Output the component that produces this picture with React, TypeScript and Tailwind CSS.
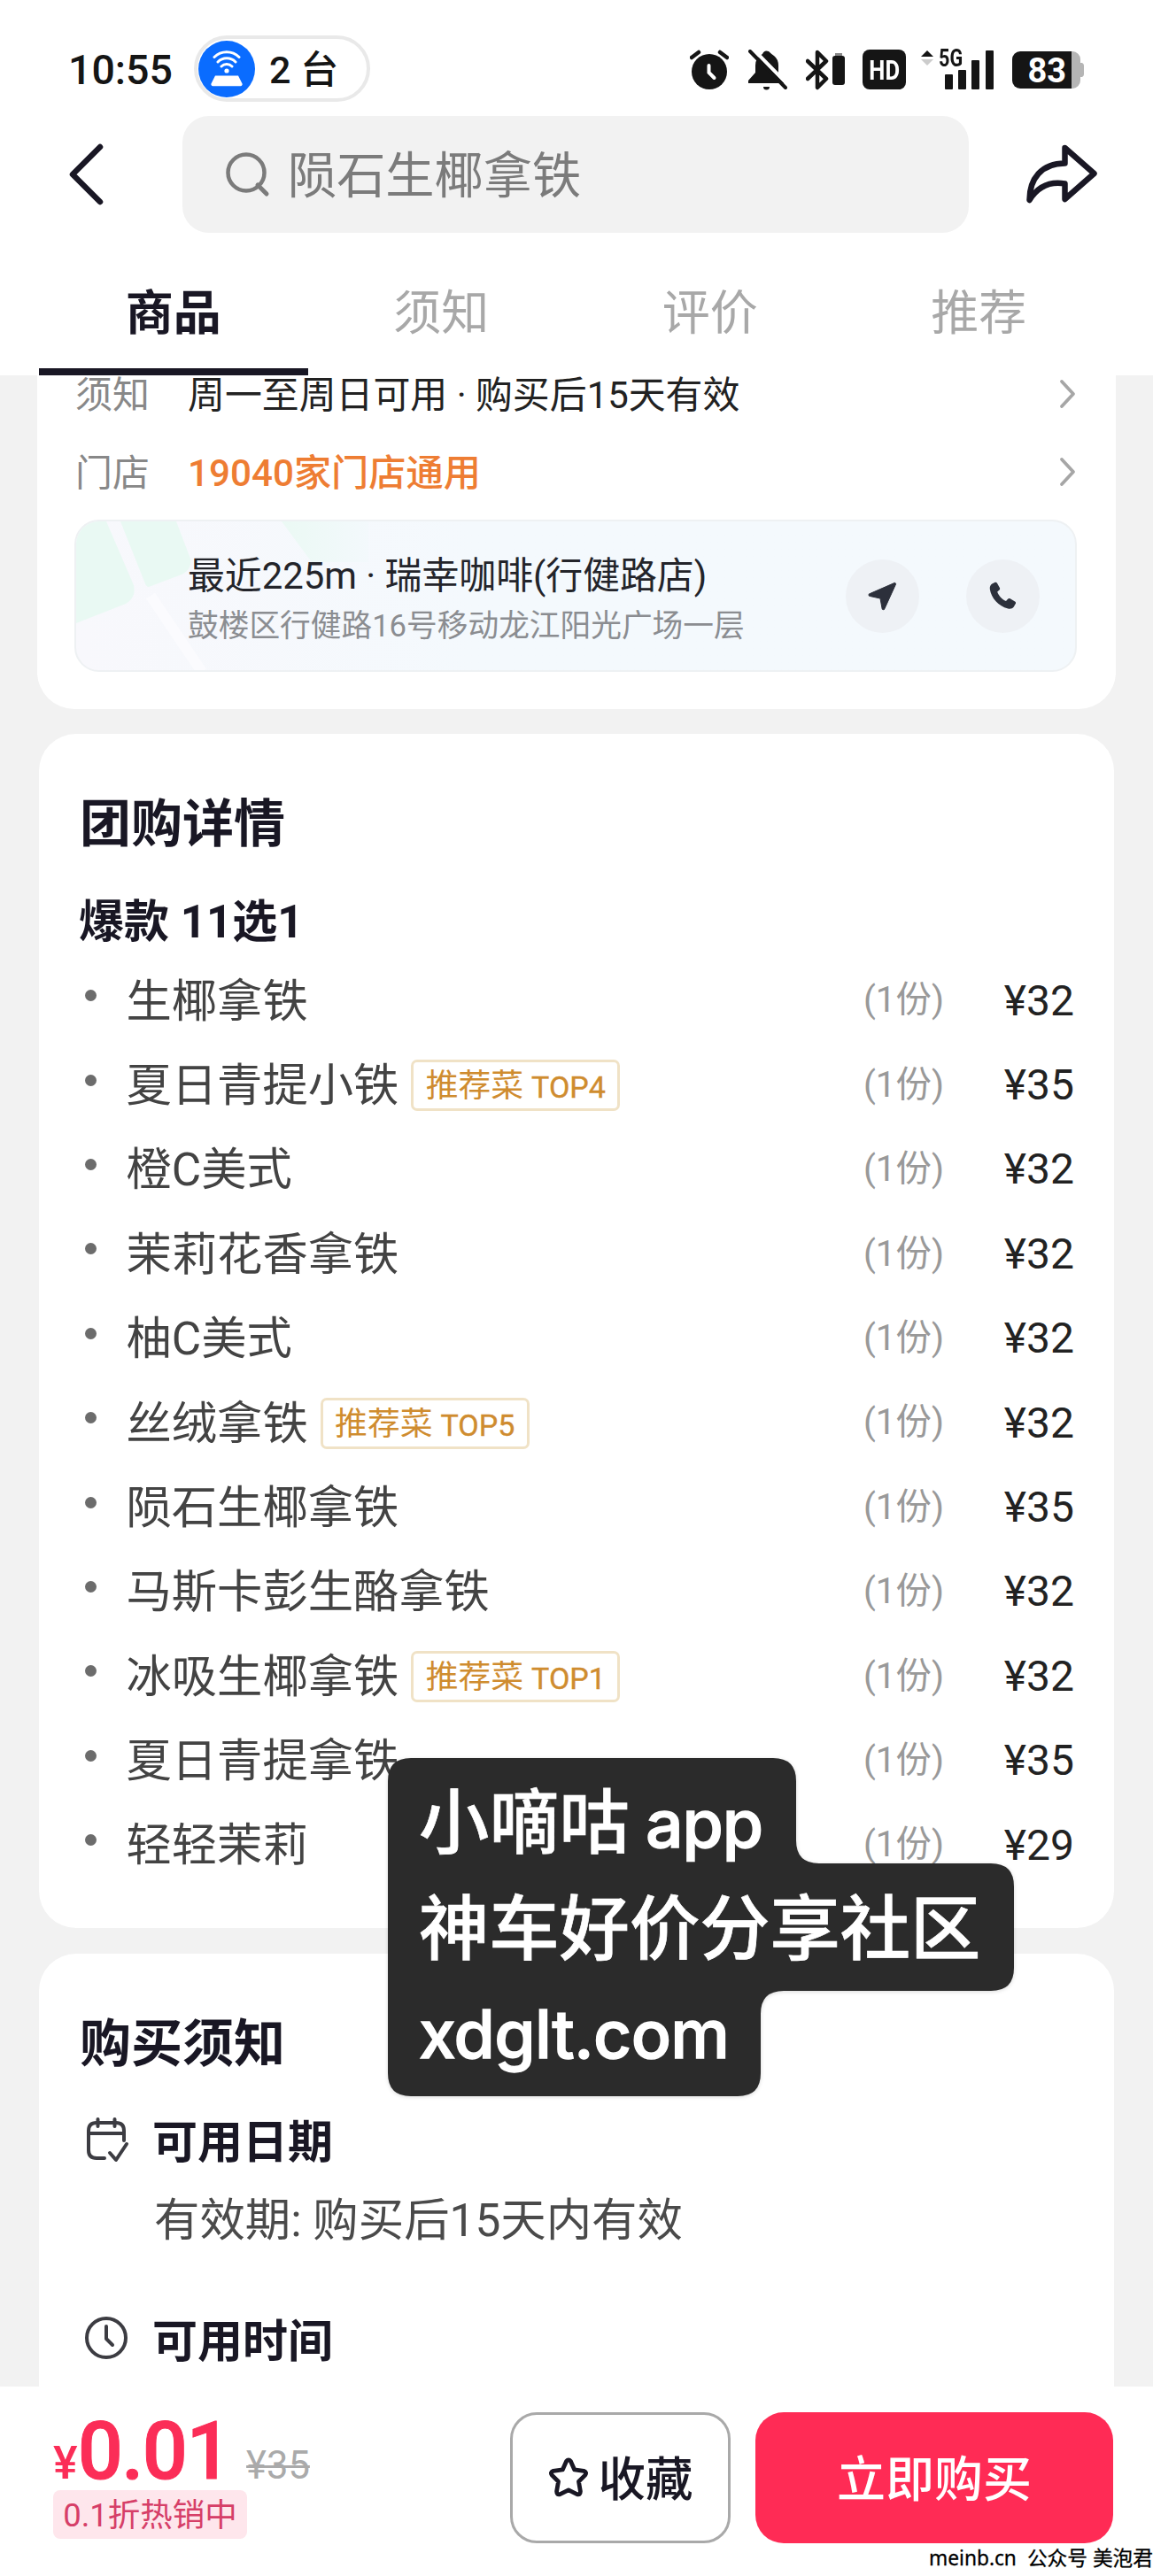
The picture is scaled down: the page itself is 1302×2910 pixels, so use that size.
import React from "react";

type Item = { name: string; price: string; tag?: string };

const items: Item[] = [
  { name: "生椰拿铁", price: "¥32" },
  { name: "夏日青提小铁", price: "¥35", tag: "TOP4" },
  { name: "橙C美式", price: "¥32" },
  { name: "茉莉花香拿铁", price: "¥32" },
  { name: "柚C美式", price: "¥32" },
  { name: "丝绒拿铁", price: "¥32", tag: "TOP5" },
  { name: "陨石生椰拿铁", price: "¥35" },
  { name: "马斯卡彭生酪拿铁", price: "¥32" },
  { name: "冰吸生椰拿铁", price: "¥32", tag: "TOP1" },
  { name: "夏日青提拿铁", price: "¥35" },
  { name: "轻轻茉莉", price: "¥29" },
];

const tabs = ["商品", "须知", "评价", "推荐"];

function RouterBadge() {
  return (
    <svg width="64" height="64" viewBox="0 0 64 64" className="shrink-0">
      <circle cx="32" cy="32" r="32" fill="#0a6cff" />
      <g fill="none" stroke="#fff" strokeWidth="3" strokeLinecap="round">
        <path d="M18 18.500a20 20 0 0 1 28 0" />
        <path d="M22 24a14 14 0 0 1 20 0" />
        <path d="M26 29a8.500 8.500 0 0 1 12 0" />
      </g>
      <circle cx="32" cy="34" r="2.600" fill="#fff" />
      <path d="M19 39.500h26l4.500 9a2 2 0 0 1-1.800 2.700H16.300a2 2 0 0 1-1.800-2.700z" fill="#fff" />
    </svg>
  );
}

function AlarmIcon() {
  return (
    <svg width="44" height="46" viewBox="0 0 44 46">
      <circle cx="22" cy="25" r="20" fill="#151515" />
      <path d="M2 9L10 3M42 9L34 3" stroke="#151515" strokeWidth="4.500" strokeLinecap="round" />
      <path d="M21.500 18v8l6 6" fill="none" stroke="#fff" strokeWidth="4" strokeLinecap="round" />
    </svg>
  );
}

function BellOffIcon() {
  return (
    <svg width="44" height="46" viewBox="0 0 44 46">
      <path
        d="M16 5Q18 0 23 2Q26 5 29 7Q34 11 34 18V27L41 37V38H0V35L8 26V18Q8 9 16 5Z"
        fill="#151515"
      />
      <path d="M17 42h7a3.500 3.500 0 0 1-7 0z" fill="#151515" />
      <path d="M-2 -6L1 2L42 43L47 43L6 -4Z" fill="none" />
      <path d="M5 -1L45 40" stroke="#fff" strokeWidth="4" />
      <path d="M0 4L8 12V20L0 12Z" fill="#fff" />
      <path d="M2 2L42 43" stroke="#151515" strokeWidth="4" strokeLinecap="round" />
    </svg>
  );
}

function BluetoothIcon() {
  return (
    <svg width="46" height="46" viewBox="0 0 46 46">
      <path
        d="M2 13L23 33L13 43V3L23 13L2 33"
        fill="none"
        stroke="#151515"
        strokeWidth="4.500"
        strokeLinejoin="round"
        strokeLinecap="round"
      />
      <rect x="30" y="7" width="14" height="33" rx="3" fill="#151515" />
      <rect x="33" y="4" width="8" height="3" fill="#888" />
    </svg>
  );
}

function SignalIcon() {
  return (
    <div className="relative h-[46px] w-[84px]">
      <svg width="84" height="46" viewBox="0 0 84 46">
        <path d="M7 1L14 8H0z" fill="#151515" />
        <path d="M7 18L14 11H0z" fill="#ccc" />
        <rect x="27" y="28" width="9" height="17" rx="1" fill="#151515" />
        <rect x="42" y="23" width="9" height="22" rx="1" fill="#151515" />
        <rect x="57" y="12" width="9" height="33" rx="1" fill="#151515" />
        <rect x="73" y="1" width="9" height="44" rx="1" fill="#151515" />
      </svg>
      <span className="absolute -top-[4px] left-[20px] origin-left scale-x-80 text-[27px] leading-7 font-bold whitespace-nowrap text-[#151515]">5G</span>
    </div>
  );
}

function BatteryIcon() {
  return (
    <svg width="82" height="44" viewBox="0 0 82 44">
      <path d="M66 1h2a9 9 0 0 1 9 9v4h2q2 1 2 3v10q0 2-2 3h-2v4a9 9 0 0 1-9 9h-2z" fill="#b5b5b5" />
      <path d="M9 1h58v42H9a9 9 0 0 1-9-9V10a9 9 0 0 1 9-9z" fill="#151515" />
      <text x="17.500" y="36" fontFamily="Roboto" fontWeight="700" fontSize="38" fill="#fff">
        83
      </text>
    </svg>
  );
}

function ShareIcon() {
  return (
    <svg width="82" height="70" viewBox="0 0 82 70" className="shrink-0">
      <path
        d="M44.500 5L77.500 34L44.500 63V45.500C24 42 12 52 4.500 64C4.500 40 18 22.500 44.500 22.500Z"
        fill="none"
        stroke="#191724"
        strokeWidth="6.500"
        strokeLinejoin="round"
      />
    </svg>
  );
}

function RowChevron() {
  return (
    <svg width="20" height="34" viewBox="0 0 20 34" className="mb-[4px] ml-auto">
      <path d="M3 3L16 17L3 31" fill="none" stroke="#a6a6a6" strokeWidth="3.800" strokeLinecap="round" strokeLinejoin="round" />
    </svg>
  );
}

function Header() {
  return (
    <header className="flex h-[424px] shrink-0 flex-col bg-white">
      <div className="mt-10 flex h-[75px] items-center pl-[77px]">
        <span className="w-[142px] pt-[3px] text-[46.500px] leading-none font-medium text-[#151515]">10:55</span>
        <div className="flex h-[75px] w-[199px] items-center rounded-full border-4 border-[#e9e9e9] pl-px">
          <RouterBadge />
          <span className="ml-[16px] pt-[3px] text-[43px] leading-none font-medium text-[#151515]">2 台</span>
        </div>
        <div className="ml-[361px] flex items-center pt-[2px]">
          <AlarmIcon />
          <div className="ml-[22px] flex"><BellOffIcon /></div>
          <div className="ml-[21px] flex"><BluetoothIcon /></div>
          <div className="ml-[18px] flex h-[45px] w-[49px] items-center justify-center rounded-[8px] bg-[#151515] pt-px text-[32px] leading-none font-bold text-white">
            <span className="scale-x-80">HD</span>
          </div>
          <div className="ml-[17px] flex"><SignalIcon /></div>
          <div className="ml-[19px] flex"><BatteryIcon /></div>
        </div>
      </div>

      <div className="mt-4 flex h-[132px] items-center pl-[76px]">
        <svg width="42" height="74" viewBox="0 0 42 74" className="shrink-0">
          <path d="M37 6L6 37L37 68" fill="none" stroke="#191724" strokeWidth="6.500" strokeLinecap="round" strokeLinejoin="round" />
        </svg>
        <div className="ml-[88px] flex h-[132px] w-[888px] items-center rounded-[30px] bg-[#f2f2f2] pl-[48px]">
          <svg width="52" height="52" viewBox="0 0 52 52">
            <circle cx="24" cy="24" r="20.500" fill="none" stroke="#7b7b7b" strokeWidth="4.500" />
            <path d="M37 38L47 48" stroke="#7b7b7b" strokeWidth="5" strokeLinecap="round" />
          </svg>
          <span className="ml-[19px] pt-[5px] text-[55.200px] leading-none text-[#7b7b7b]">陨石生椰拿铁</span>
        </div>
        <div className="ml-[64px] flex"><ShareIcon /></div>
      </div>

      <nav className="mx-[44px] mt-[27px] grid h-[134px] grid-cols-4">
        {tabs.map((t, i) => (
          <div
            key={t}
            className={
              i === 0
                ? "flex items-center justify-center border-b-8 border-[#191724] pt-[4px] text-[54px] leading-none font-bold text-[#191724]"
                : "flex items-center justify-center border-b-8 border-transparent pt-[4px] pr-[2px] text-[54px] leading-none text-[#a8a8a8]"
            }
          >
            {t}
          </div>
        ))}
      </nav>
    </header>
  );
}

function StoreCard() {
  return (
    <section className="mx-[42px] flex h-[377px] shrink-0 flex-col rounded-b-[42px] bg-white px-[42px]">
      <div className="flex h-11 items-center pt-[2px] pr-[2px] pl-px text-[41.900px] leading-none">
        <span className="w-[127px] text-[#888]">须知</span>
        <span className="text-[#222]">周一至周日可用 · 购买后15天有效</span>
        <RowChevron />
      </div>
      <div className="mt-11 flex h-11 items-center pt-[2px] pr-[2px] pl-px text-[41.900px] leading-none">
        <span className="w-[127px] text-[#888]">门店</span>
        <span className="text-[42.200px] font-medium text-[#ee7d33]">19040家门店通用</span>
        <RowChevron />
      </div>
      <div className="relative mt-[31px] flex h-[172px] w-[1132px] items-center overflow-hidden rounded-[28px] border-2 border-[#eef1f3] bg-linear-to-r from-[#f8f8fc] to-[#f4f9fd] to-40% pl-[126px]">
        <svg width="340" height="170" viewBox="0 0 340 170" className="absolute top-0 left-0">
          <defs>
            <linearGradient id="fade" x1="0" x2="1">
              <stop offset="0" stopColor="#ebf9f4" />
              <stop offset="1" stopColor="#f3f9fc" />
            </linearGradient>
          </defs>
          <path d="M0 0H34L65 72Q68 86 56 93L0 115Z" fill="#e9f9f3" />
          <path d="M50 0H113L129 42Q131 54 119 60L82 74Q79 74 77 68Z" fill="#e9f9f3" />
          <path d="M232 0H330V46H266Z" fill="url(#fade)" />
          <path d="M84 84L142 170" stroke="#fbfbfe" strokeWidth="12" />
        </svg>
        <div className="relative flex flex-col pt-[9px]">
          <span className="text-[41.850px] leading-[46px] text-[#23242a]">最近225m · 瑞幸咖啡(行健路店)</span>
          <span className="mt-[13px] text-[34.700px] leading-[40px] text-[#8b8d91]">鼓楼区行健路16号移动龙江阳光广场一层</span>
        </div>
        <div className="ml-auto flex gap-[53px] pr-[40px]">
          <div className="flex size-[83px] items-center justify-center rounded-full bg-[#eef1f5]">
            <svg width="34" height="34" viewBox="0 0 34 34">
              <path d="M30 2.500L2.500 14.500a1.500 1.500 0 0 0 0 3L14 20l2 11a1.500 1.500 0 0 0 3 .4L31.500 4a1.200 1.200 0 0 0-1.500-1.500z" fill="#2c303b" stroke="#2c303b" strokeLinejoin="round" />
            </svg>
          </div>
          <div className="flex size-[83px] items-center justify-center rounded-full bg-[#eef1f5]">
            <svg width="32" height="32" viewBox="0 0 32 32">
              <path
                d="M3.300 2.600l3-1.700c1.200-.5 2.200 0 2.800 1l2.800 5.200c.5 1.100.2 2-.7 2.700l-2 1.700c1.500 4.600 5.300 8.500 9.800 10.500l2-2.300c.8-.9 1.800-1 2.700-.5l5.400 3.200c1 .7 1.300 1.700.7 2.700l-2 3.500c-1.400 1.900-3.800 2.600-6.600 2C10.500 27.500 2.300 18.500.8 8.400c-.3-2.500.6-4.700 2.500-5.800z"
                fill="#2c303b"
              />
            </svg>
          </div>
        </div>
      </div>
    </section>
  );
}

function DetailCard() {
  return (
    <section className="mx-[44px] mt-7 flex h-[1349px] shrink-0 flex-col rounded-[42px] bg-white pt-[73px] pr-[45px] pl-[46px]">
      <h2 className="text-[58px] leading-[58px] font-bold text-[#191724]">团购详情</h2>
      <h3 className="-ml-px mt-[57px] text-[51px] leading-[50px] font-bold text-[#191724]">爆款 11选1</h3>
      <ul className="mt-4 flex flex-col">
        {items.map((it) => (
          <li key={it.name} className="flex h-[95.400px] items-center leading-none">
            <span className="mb-[12px] ml-[6px] size-[13px] rounded-full bg-[#6c6c6c]" />
            <span className="ml-[33.500px] pt-px text-[51.300px] text-[#434343]">{it.name}</span>
            {it.tag && (
              <span className="ml-[14px] flex h-[58px] w-[236px] items-center justify-center rounded-[7px] border-3 border-[#f0e2c6] pt-[3px] text-[36.800px] text-[#cf8c2f]">
                推荐菜
                <span className="ml-[9px] pt-px text-[34px] [-webkit-text-stroke:0.400px_#cf8c2f]">{it.tag}</span>
              </span>
            )}
            <span className="ml-auto text-[40.400px] text-[#999]">(1份)</span>
            <span className="ml-[66px] w-[81px] text-right text-[48px] text-[#222]">{it.price}</span>
          </li>
        ))}
      </ul>
    </section>
  );
}

function NoticeCard() {
  return (
    <section className="mx-[44px] mt-[29px] flex h-[489px] shrink-0 flex-col rounded-t-[42px] bg-white pt-[73px] pl-[46px]">
      <h2 className="text-[58px] leading-[58px] font-bold text-[#191724]">购买须知</h2>
      <div className="mt-[57px] flex h-[51px] items-center">
        <svg width="52" height="52" viewBox="0 0 52 52" className="mb-[6px] ml-[6px]">
          <g fill="none" stroke="#3c3c42" strokeWidth="4" strokeLinecap="round" strokeLinejoin="round">
            <path d="M22 46H13Q4 46 4 37V15Q4 6 13 6H35Q44 6 44 15V26" />
            <path d="M4 18H44M14.500 2V10M33.500 2V10" />
            <path d="M28 40L35 48L47 30" />
          </g>
        </svg>
        <h3 className="ml-[24px] text-[51px] leading-none font-bold text-[#191724]">可用日期</h3>
      </div>
      <p className="mt-[38px] ml-[84px] text-[51.400px] leading-[50px] text-[#4a4a4a]">有效期: 购买后15天内有效</p>
      <div className="mt-[86px] flex h-[51px] items-center">
        <svg width="50" height="50" viewBox="0 0 50 50" className="mb-[10px] ml-[5px]">
          <g fill="none" stroke="#3c3c42" strokeWidth="4" strokeLinecap="round" strokeLinejoin="round">
            <circle cx="25" cy="25" r="22" />
            <path d="M25 12V26L32 33" />
          </g>
        </svg>
        <h3 className="ml-[27px] text-[51px] leading-none font-bold text-[#191724]">可用时间</h3>
      </div>
    </section>
  );
}

function BuyBar() {
  return (
    <footer className="flex h-[214px] shrink-0 items-start bg-white pt-[29px] pl-[60px]">
      <div className="flex w-[516px] flex-col">
        <div className="flex h-[88px] items-baseline leading-[88px] text-[#fb2d57]">
          <span className="text-[52px] leading-none font-medium tracking-[-2px]">¥</span>
          <span className="ml-[2px] text-[90px] leading-[90px] font-medium tracking-[-1.500px] [-webkit-text-stroke:1px_#fb2d57]">0.01</span>
          <span className="ml-[18px] text-[43.500px] leading-none text-[#aaa] line-through decoration-[3px]">¥35</span>
        </div>
        <span className="flex h-[55px] w-[219px] items-center justify-center rounded-[8px] bg-[#fee6ec] pt-[3px] text-[36.500px] leading-none text-[#d63f68]">
          0.1折热销中
        </span>
      </div>
      <button className="flex h-[148px] w-[249px] items-center justify-center rounded-[30px] border-3 border-[#a9a9a9] text-[53.500px] leading-none font-medium text-[#191724]">
        <svg width="46" height="48" viewBox="0 0 48 48" className="mr-[11px]">
          <path
            d="M21.500 4.500Q24 1.500 26.500 4.500L31 14.500L42 16Q46 17.500 43.500 21L36 28.500L38 40Q38 44.500 34 43.500L24 38.500L14 43.500Q10 44.500 10 40L12 28.500L4.500 21Q2 17.500 6 16L17 14.500Z"
            fill="none"
            stroke="#191724"
            strokeWidth="5"
            strokeLinejoin="round"
          />
        </svg>
        <span className="pt-[5px]">收藏</span>
      </button>
      <button className="ml-[28px] flex h-[148px] w-[404px] items-center justify-center rounded-[32px] bg-[#ff2b55] pt-[5px] text-[55px] leading-none font-medium text-white">
        立即购买
      </button>
    </footer>
  );
}

function CommunityLabel() {
  return (
    <div className="absolute top-[1986px] left-[438px] h-[382px] w-[707px]">
      <svg width="707" height="382" viewBox="0 0 707 382" className="absolute inset-0 overflow-visible drop-shadow-sm">
        <path
          d="M26 0H435Q461 0 461 26V93Q461 119 487 119H681Q707 119 707 145V237Q707 263 681 263H447Q421 263 421 289V356Q421 382 395 382H26Q0 382 0 356V26Q0 0 26 0Z"
          fill="#2b2b2b"
        />
      </svg>
      <div className="relative flex flex-col pt-[13px] pl-[35px] font-[Inter,'Noto_Sans_CJK_SC',sans-serif] text-[79.300px] leading-[119px] font-medium whitespace-nowrap text-white [-webkit-text-stroke:0.700px_white]">
        <span>小嘀咕<span className="ml-[18px] text-[75px] tracking-[-1px] [-webkit-text-stroke:1.400px_white]">app</span></span>
        <span>神车好价分享社区</span>
        <span className="text-[75px] tracking-[-0.700px] [-webkit-text-stroke:1.400px_white]">xdglt.com</span>
      </div>
    </div>
  );
}

export default function App() {
  return (
    <div className="relative flex h-[2910px] w-[1302px] flex-col overflow-hidden bg-[#f2f2f2] font-[Roboto,'Noto_Sans_CJK_SC',sans-serif]">
      <Header />
      <StoreCard />
      <DetailCard />
      <NoticeCard />
      <BuyBar />
      <CommunityLabel />
      <div className="absolute right-0 bottom-[6px] flex gap-[6px] font-['Noto_Sans','Noto_Sans_CJK_SC',sans-serif] text-[22.700px] leading-7 whitespace-nowrap text-black [-webkit-text-stroke:0.300px_black]">
        <span className="mr-[6px]">meinb.cn</span>
        <span>公众号</span>
        <span>美泡君</span>
      </div>
    </div>
  );
}
